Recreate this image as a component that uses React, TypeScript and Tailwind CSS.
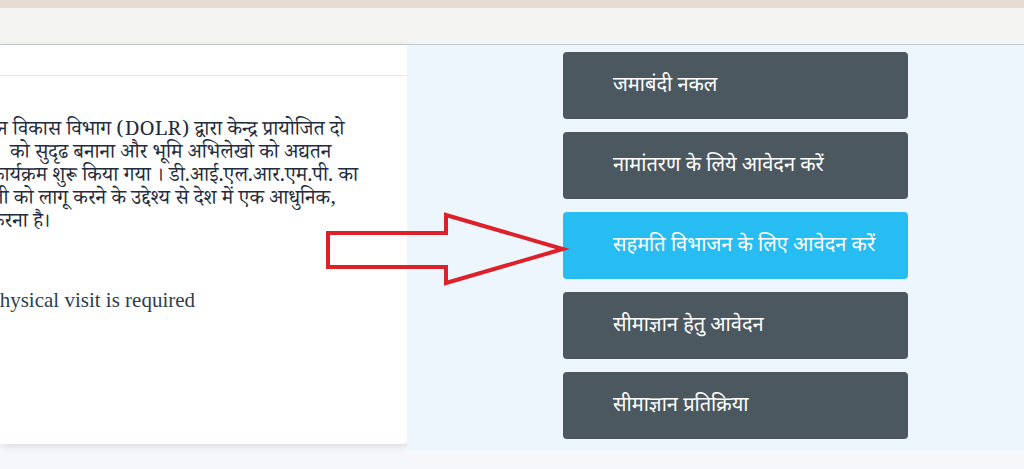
import React from "react";

const services = [
  { label: "जमाबंदी नकल", active: false },
  { label: "नामांतरण के लिये आवेदन करें", active: false },
  { label: "सहमति विभाजन के लिए आवेदन करें", active: true },
  { label: "सीमाज्ञान हेतु आवेदन", active: false },
  { label: "सीमाज्ञान प्रतिक्रिया", active: false },
];

const serif = "font-['Noto_Serif_Devanagari','Liberation_Serif',serif]";

const Arrow = () => (
  <svg
    className="absolute left-[320px] top-[205px] pointer-events-none"
    width="250"
    height="86"
    viewBox="0 0 250 86"
  >
    <polygon
      points="8,28 126,28 126,10 243,44 126,78 126,62 8,62"
      fill="none"
      stroke="#dd2029"
      strokeWidth="4"
      strokeLinejoin="miter"
    />
  </svg>
);

export default function App() {
  return (
    <div className="relative w-[1024px] h-[469px] overflow-hidden bg-[#f6f7fb]">
      <div className="h-2 bg-[#e6dcd2]" />
      <div className="h-[37px] bg-[#f4f4f3] border-b border-[#c5cccf]" />

      <div className="flex h-[406px]">
        {/* left info card */}
        <div className="w-[407px] shrink-0">
          <div className="h-[399px] bg-white rounded-br-[4px] shadow-[2px_2px_8px_rgba(0,0,0,0.12)] overflow-hidden">
            <div className="h-[31px] border-b border-[#e6e8eb]" />
            <div className={`${serif} text-[20.5px] leading-[23px] text-[#1f2d3d] pt-[45px] whitespace-nowrap`}>
              <div className="-ml-[3px]">न विकास विभाग (DOLR) द्वारा केन्द्र प्रायोजित दो</div>
              <div className="pl-[10px]">को सुदृढ बनाना और भूमि अभिलेखो को अद्यतन</div>
              <div className="-ml-[10px]">कार्यक्रम शुरू किया गया । डी.आई.एल.आर.एम.पी. का</div>
              <div className="-ml-[10px]">ली को लागू करने के उद्देश्य से देश में एक आधुनिक,</div>
              <div className="-ml-[10px]">करना है।</div>
            </div>
            <div className="font-['Liberation_Serif',serif] text-[21px] leading-[23px] text-[#2c3e50] mt-[53px] -ml-[12px] whitespace-nowrap">
              Physical visit is required
            </div>
          </div>
        </div>

        {/* service buttons */}
        <div className="flex-1 bg-[#eef6fd] pt-[7px] pl-[156px]">
          <div className="flex flex-col gap-[13px] w-[345px]">
            {services.map((s) => (
              <div
                key={s.label}
                className={`h-[67px] rounded-[4px] flex items-center pl-[50px] text-white text-[20px] font-['Noto_Sans_Devanagari','Noto_Sans',sans-serif] ${
                  s.active ? "bg-[#27bdf2]" : "bg-[#4b585f]"
                }`}
              >
                {s.label}
              </div>
            ))}
          </div>
        </div>
      </div>

      <Arrow />
    </div>
  );
}
